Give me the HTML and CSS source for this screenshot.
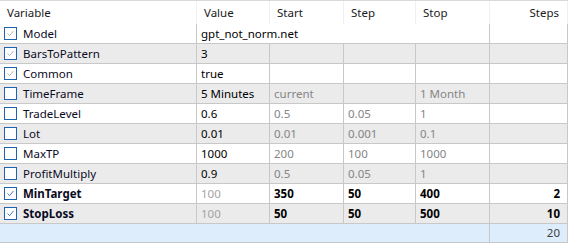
FILE: index.html
```html
<!DOCTYPE html>
<html>
<head>
<meta charset="utf-8">
<link rel="stylesheet" href="styles.css">
</head>
<body>
<div class="grid">
  <div class="row head">
    <div class="c">Variable</div>
    <div class="c">Value</div>
    <div class="c">Start</div>
    <div class="c">Step</div>
    <div class="c">Stop</div>
    <div class="c r">Steps</div>
  </div>

  <div class="row w">
    <div class="c var"><span class="cb"><svg viewBox="0 0 13 13"><path class="ck dis" d="M3 6.5 L5.5 9 L10 3.5"/></svg></span>Model</div>
    <div class="c span4">gpt_not_norm.net</div>
    <div class="c"></div>
  </div>

  <div class="row g">
    <div class="c var"><span class="cb"><svg viewBox="0 0 13 13"><path class="ck dis" d="M3 6.5 L5.5 9 L10 3.5"/></svg></span>BarsToPattern</div>
    <div class="c">3</div>
    <div class="c"></div>
    <div class="c"></div>
    <div class="c"></div>
    <div class="c"></div>
  </div>

  <div class="row w">
    <div class="c var"><span class="cb"><svg viewBox="0 0 13 13"><path class="ck dis" d="M3 6.5 L5.5 9 L10 3.5"/></svg></span>Common</div>
    <div class="c">true</div>
    <div class="c"></div>
    <div class="c"></div>
    <div class="c"></div>
    <div class="c"></div>
  </div>

  <div class="row g">
    <div class="c var"><span class="cb"></span>TimeFrame</div>
    <div class="c">5 Minutes</div>
    <div class="c mute">current</div>
    <div class="c"></div>
    <div class="c mute">1 Month</div>
    <div class="c"></div>
  </div>

  <div class="row w">
    <div class="c var"><span class="cb"></span>TradeLevel</div>
    <div class="c">0.6</div>
    <div class="c mute">0.5</div>
    <div class="c mute">0.05</div>
    <div class="c mute">1</div>
    <div class="c"></div>
  </div>

  <div class="row g">
    <div class="c var"><span class="cb"></span>Lot</div>
    <div class="c">0.01</div>
    <div class="c mute">0.01</div>
    <div class="c mute">0.001</div>
    <div class="c mute">0.1</div>
    <div class="c"></div>
  </div>

  <div class="row w">
    <div class="c var"><span class="cb"></span>MaxTP</div>
    <div class="c">1000</div>
    <div class="c mute">200</div>
    <div class="c mute">100</div>
    <div class="c mute">1000</div>
    <div class="c"></div>
  </div>

  <div class="row g">
    <div class="c var"><span class="cb"></span>ProfitMultiply</div>
    <div class="c">0.9</div>
    <div class="c mute">0.5</div>
    <div class="c mute">0.05</div>
    <div class="c mute">1</div>
    <div class="c"></div>
  </div>

  <div class="row w on">
    <div class="c var"><span class="cb"><svg viewBox="0 0 13 13"><path class="ck" d="M3 6.5 L5.5 9 L10 3.5"/></svg></span>MinTarget</div>
    <div class="c light">100</div>
    <div class="c">350</div>
    <div class="c">50</div>
    <div class="c">400</div>
    <div class="c r">2</div>
  </div>

  <div class="row g on">
    <div class="c var"><span class="cb"><svg viewBox="0 0 13 13"><path class="ck" d="M3 6.5 L5.5 9 L10 3.5"/></svg></span>StopLoss</div>
    <div class="c light">100</div>
    <div class="c">50</div>
    <div class="c">50</div>
    <div class="c">500</div>
    <div class="c r">10</div>
  </div>

  <div class="row foot">
    <div class="c span5"></div>
    <div class="c r total">20</div>
  </div>
</div>
</body>
</html>
```

FILE: styles.css
```css
html, body {
  margin: 0;
  padding: 0;
  background: #ffffff;
}

body {
  font-family: "Noto Sans", "Open Sans", sans-serif;
  font-size: 11.5px;
  color: #000000;
}

.grid {
  width: 568px;
  border-top: 1px solid #d9d9d9;
}

.row {
  display: grid;
  grid-template-columns: 197px 73px 74px 72px 74px 78px;
  height: 20px;
  box-sizing: border-box;
  border-bottom: 1px solid #c8c8c8;
}

.row.head {
  height: 23px;
  border-bottom: none;
}

.row.head .c {
  padding-left: 7px;
  border-right: 1px solid #f0f0f0;
  color: #1a1a1a;
}

.row.head .c.r {
  padding-right: 8px;
  padding-left: 0;
}

.row.w { background: #ffffff; }
.row.g { background: #ebebeb; }
.row.foot { background: #deedfb; height: 19px; }

.c {
  box-sizing: border-box;
  border-right: 1px solid #c8c8c8;
  padding-left: 4px;
  display: flex;
  align-items: center;
  white-space: nowrap;
  overflow: hidden;
  line-height: 1;
}

.c.r {
  justify-content: flex-end;
  padding-right: 7px;
}

.span4 { grid-column: span 4; }
.span5 { grid-column: span 5; }

.c.var {
  padding-left: 4px;
  gap: 6px;
  color: #0a0a1e;
}

.cb {
  width: 13px;
  height: 13px;
  box-sizing: border-box;
  border: 1px solid #1f63b0;
  background: #ffffff;
  display: inline-block;
  flex: none;
}

.cb svg {
  display: block;
  width: 11px;
  height: 11px;
}

.ck {
  fill: none;
  stroke: #2461ae;
  stroke-width: 1;
}

.ck.dis {
  stroke: #a8a8a8;
}

.mute { color: #858585; }
.light { color: #a3a3a3; }

.on .c { font-weight: bold; }
.on .c.light { font-weight: normal; }

.total { color: #404040; }
```
